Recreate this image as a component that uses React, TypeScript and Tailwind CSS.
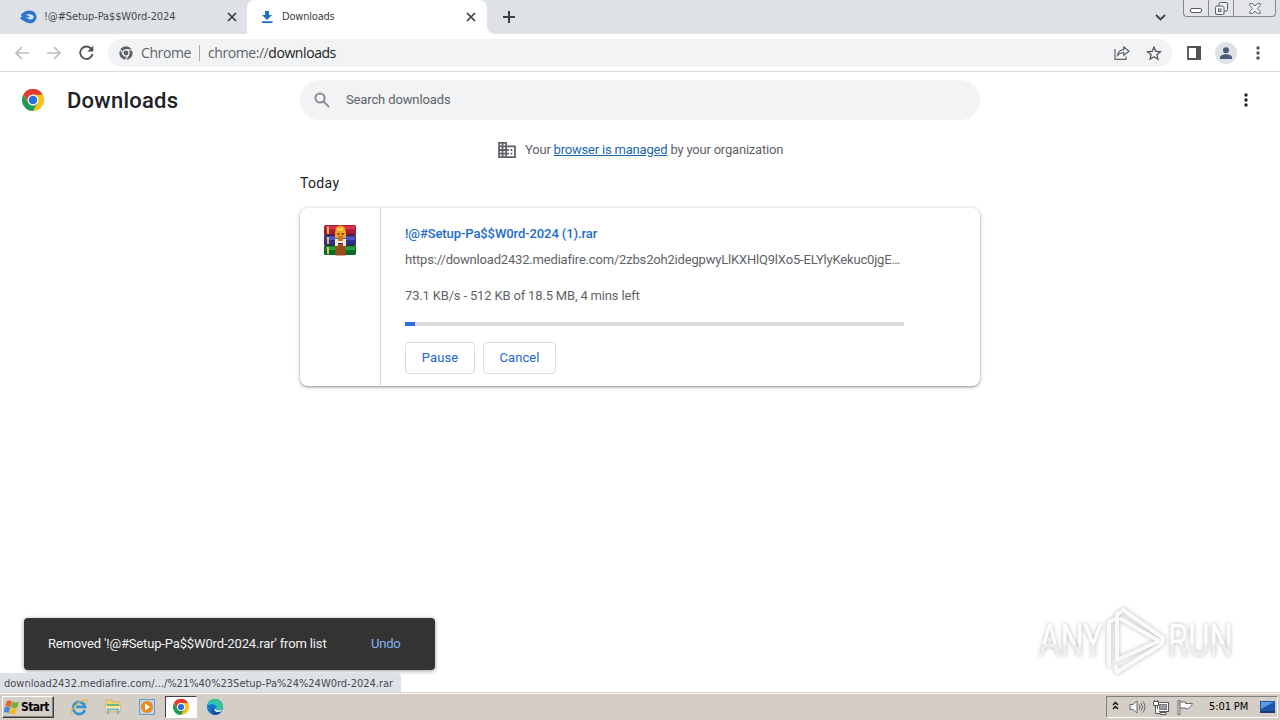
import type { ReactNode } from "react";

const roboto = "font-['Roboto','Liberation_Sans',sans-serif]";
const tahoma = "font-['DejaVu_Sans_Condensed','DejaVu_Sans',sans-serif]";

function ChromeLogo({ size }: { size: number }) {
  return (
    <svg width={size} height={size} viewBox="0 0 48 48" className="shrink-0">
      <path d="M24 24 3.2 12A24 24 0 0 1 44.8 12Z" fill="#db4437" />
      <path d="M24 12H44.8A24 24 0 0 1 24 48L34.4 30Z" fill="#fbc11a" />
      <path d="M24 48A24 24 0 0 1 3.2 12L13.6 30 24 36 34.4 30Z" fill="#1e9b50" />
      <path d="M3.2 12 13.6 30 24 24V12H44.8A24 24 0 0 0 3.2 12Z" fill="#e33b2e" />
      <circle cx="24" cy="24" r="12" fill="#fff" />
      <circle cx="24" cy="24" r="9.3" fill="#2c6fe0" />
    </svg>
  );
}

function ChromeMono() {
  return (
    <svg width="14" height="14" viewBox="0 0 48 48" className="shrink-0">
      <circle cx="24" cy="24" r="23" fill="#5f6368" />
      <circle cx="24" cy="24" r="10.5" fill="none" stroke="#f1f3f4" strokeWidth="4" />
      <path d="M24 13.5H45M14.9 29.2 4.5 11M33.1 29.2 22.5 47.5" stroke="#f1f3f4" strokeWidth="4" />
    </svg>
  );
}

function CloseIcon() {
  return (
    <svg width="10" height="10" viewBox="0 0 10 10" className="shrink-0">
      <path d="M1 1 9 9M9 1 1 9" stroke="#3c4043" strokeWidth="1.7" />
    </svg>
  );
}

function Dots({ color }: { color: string }) {
  return (
    <svg width="4" height="14" viewBox="0 0 4 14" fill={color} className="shrink-0">
      <circle cx="2" cy="2" r="1.7" />
      <circle cx="2" cy="7" r="1.7" />
      <circle cx="2" cy="12" r="1.7" />
    </svg>
  );
}

function TabStrip() {
  return (
    <div className="relative flex h-[34px] shrink-0 bg-[#dee1e6]">
      <div className={`flex w-[247px] items-center pr-[10px] pl-5 text-[11px] text-[#45494d] ${tahoma}`}>
        <svg width="17" height="14" viewBox="0 0 17 14" className="shrink-0">
          <path d="M3 3C4.500 1.300 6.500.5 9.500.5c4.200 0 7 2.800 7 6.400S13.500 13.300 10 13.300c-2.700 0-4.500-1.300-6-2.300C2.500 10 .3 10 .3 8.300c0-1 1-1.500 2.200-1.500C1.500 6.500 1 5.900 1.200 4.800 1.400 3.600 2.200 3 3 3Z" fill="#2f78c9" />
          <path d="M5.500 4.800C8 3.800 12 3.900 13.300 5.800c1 1.600-.3 3.700-2.500 3.700-2.300 0-3-1.300-5-1.800 1.700-.2 3-.2 4.200.1C9.500 6 8 5.200 5.500 4.800Z" fill="#dceaf8" />
        </svg>
        <span className="ml-[7px] flex-1 tracking-[-0.1px] whitespace-nowrap">!@#Setup-Pa$$W0rd-2024</span>
        <CloseIcon />
      </div>
      <div className={`flex w-[240px] items-center rounded-t-lg bg-white pr-[11px] pl-[14px] text-[11px] text-[#3c4043] ${tahoma}`}>
        <svg width="12" height="14" viewBox="0 0 12 14" className="shrink-0">
          <path d="M4 1h4v4h3L6 10 1 5h3ZM1 11.300h10.500v1.700H1Z" fill="#1a73c8" />
        </svg>
        <span className="ml-[9px] flex-1 tracking-[-0.2px]">Downloads</span>
        <CloseIcon />
      </div>
      <svg width="8" height="8" viewBox="0 0 8 8" className="self-end">
        <path d="M0 0V8H8A8 8 0 0 1 0 0Z" fill="#fff" />
      </svg>
      <svg width="12" height="12" viewBox="0 0 12 12" className="mt-[11px] ml-2">
        <path d="M6 0V12M0 6H12" stroke="#3c4043" strokeWidth="2" />
      </svg>
      <div className="flex-1" />
      <svg width="11" height="7" viewBox="0 0 11 7" className="mt-[14px] mr-[17px]">
        <path d="M1 1 5.500 5.500 10 1" fill="none" stroke="#3c4043" strokeWidth="1.800" />
      </svg>
      <div className="mr-[4px] flex h-[17px] w-[93px] rounded-b-[4px] border border-t-0 border-[#85888e] bg-[#e3e5e9]">
        <div className="flex w-[25px] items-center justify-center border-r border-[#85888e] pt-1">
          <div className="h-[5px] w-3 rounded-[2px] border border-[#565b63] bg-white" />
        </div>
        <div className="flex w-[25px] items-center justify-center border-r border-[#85888e]">
          <svg width="13" height="13" viewBox="0 0 13 13" fill="#f6f7f8" stroke="#565b63">
            <rect x="4" y=".5" width="8.500" height="8.500" rx="1.500" />
            <rect x=".5" y="4" width="8.500" height="8.500" rx="1.500" />
            <rect x="3.500" y="7" width="2.500" height="2.500" />
          </svg>
        </div>
        <div className="flex flex-1 items-center justify-center">
          <svg width="12" height="11" viewBox="0 0 12 11">
            <path d="M.7.700H3.800L6 3 8.200.7h3.100v1.800L8.300 5.500l3 3v1.800H8.200L6 8 3.800 10.300H.7V8.500l3-3-3-3Z" fill="#f6f7f8" stroke="#565b63" strokeWidth=".9" />
          </svg>
        </div>
      </div>
    </div>
  );
}

function Arrow({ flip }: { flip?: boolean }) {
  return (
    <svg width="14" height="14" viewBox="0 0 14 14" className={flip ? "rotate-180" : ""}>
      <path d="M14 7H1.500M7 1 1 7l6 6" fill="none" stroke="#babcbe" strokeWidth="1.700" />
    </svg>
  );
}

function Toolbar() {
  return (
    <div className="flex h-[38px] shrink-0 items-center border-b border-[#d8dadd] bg-white pl-[15px]">
      <Arrow />
      <div className="ml-[18px] flex"><Arrow flip /></div>
      <svg width="15" height="15" viewBox="0 0 15 15" className="ml-[18px]">
        <path d="M12.600 4.300A6.200 6.200 0 1 0 13.500 9" fill="none" stroke="#505458" strokeWidth="1.900" />
        <path d="M14.300.600V6.500H8.400Z" fill="#505458" />
      </svg>
      <div className="ml-[14px] flex h-[28px] w-[1064px] items-center rounded-full bg-[#f1f3f4] pr-[10px] pl-[11px] font-['Open_Sans','Noto_Sans',sans-serif] text-[14px]">
        <ChromeMono />
        <span className="ml-2 tracking-[-0.4px] text-[#5f6368]">Chrome</span>
        <span className="mx-2 h-4 w-px bg-[#a5a8ac]" />
        <span className="tracking-[-0.43px] text-[#5f6368]">chrome://<span className="text-[#202124]">downloads</span></span>
        <span className="flex-1" />
        <svg width="16" height="14" viewBox="0 0 16 14" fill="none" stroke="#5f6368" strokeWidth="1.200">
          <path d="M1 3V13.300H12V10.500" />
          <path d="M3.500 9.300C4.200 5.500 6.500 3.700 9.800 3.600V.9L15 5.200 9.800 9.300V6.700C7 6.700 5.200 7.500 3.500 9.300Z" />
        </svg>
        <svg width="16" height="16" viewBox="2 1.500 20 20" fill="#505458" className="ml-4">
          <path d="m22 9.240-7.190-.62L12 2 9.190 8.630 2 9.240l5.460 4.730L5.820 21 12 17.270 18.180 21l-1.630-7.030L22 9.240ZM12 15.400l-3.760 2.270 1-4.280-3.320-2.880 4.380-.38L12 6.100l1.710 4.040 4.380.38-3.320 2.880 1 4.280L12 15.400Z" />
        </svg>
      </div>
      <svg width="14" height="14" viewBox="0 0 14 14" className="ml-[15px]">
        <path d="M1 1H13V13H1Z" fill="none" stroke="#505458" strokeWidth="1.800" />
        <path d="M9 0h5v14H9Z" fill="#505458" />
      </svg>
      <svg width="22" height="22" viewBox="0 0 22 22" className="ml-[14px]">
        <circle cx="11" cy="11" r="11" fill="#dfe2e6" />
        <circle cx="11" cy="8.200" r="3" fill="#4b5a78" />
        <path d="M5 17V15.500C5 13.200 8.500 12.200 11 12.200s6 1 6 3.300V17Z" fill="#4b5a78" />
      </svg>
      <div className="ml-[19px]"><Dots color="#505458" /></div>
    </div>
  );
}

function RarIcon() {
  return (
    <svg width="32" height="32" viewBox="0 0 32 32" className="shrink-0">
      <rect x="0" y="1" width="32" height="10" rx="1.500" fill="#a51a35" />
      <rect x="2" y="2" width="29" height="3.500" fill="#d8324c" />
      <rect x="0" y="11" width="32" height="10" rx="1.500" fill="#31308f" />
      <rect x="2" y="12.500" width="29" height="3.500" fill="#5354c6" />
      <rect x="0" y="21" width="32" height="10" rx="1.500" fill="#0c6a27" />
      <rect x="2" y="22.500" width="29" height="3.500" fill="#2a9c42" />
      <path d="M4 2.500V10M4 13V20M4 23v7" stroke="#e9bd52" strokeWidth="2" />
      <path d="M0 11H32M0 21H32" stroke="#2a1620" strokeWidth=".8" />
      <rect x="11.500" y="20" width="10" height="11.500" fill="#9a4e20" />
      <path d="M11 14C10.500 5 12.500 1.500 16.500 1.500S22.500 5 22 14Z" fill="#f3a51d" />
      <path d="M13 4h6v3h-6Z" fill="#ffd049" />
      <path d="M13 9h2.500v2H13ZM17.500 9H20v2h-2.500Z" fill="#9a4e20" />
      <path d="M11 15h3v7h-3ZM19 15h3v7h-3ZM13 17h7v2h-7Z" fill="#f7ead0" />
      <path d="M14 12h5v5h-5Z" fill="#c9741c" />
    </svg>
  );
}

function Button({ width, children }: { width: string; children: ReactNode }) {
  return (
    <button className={`h-8 rounded-[4px] border border-[#dadce0] text-[13px] tracking-[0.08px] text-[#1a66cc] ${width}`}>
      {children}
    </button>
  );
}

function DownloadCard() {
  return (
    <div className="flex h-[178px] w-[680px] rounded-lg bg-white shadow-[0_1px_2px_rgba(60,64,67,0.4),0_1px_4px_1px_rgba(60,64,67,0.2)]">
      <div className="flex w-[81px] shrink-0 justify-center border-r border-[#d5d6d8] pt-4">
        <RarIcon />
      </div>
      <div className="flex min-w-0 flex-col pl-6 text-[13px] leading-5 whitespace-nowrap text-[#5f6368]">
        <a className="mt-4 font-medium tracking-[-0.09px] text-[#1a6bd0]">!@#Setup-Pa$$W0rd-2024 (1).rar</a>
        <span className="mt-[6px] tracking-[-0.185px]">https://download2432.mediafire.com/2zbs2oh2idegpwyLlKXHlQ9lXo5-ELYlyKekuc0jgE…</span>
        <span className="mt-4 tracking-[-0.165px]">73.1 KB/s - 512 KB of 18.5 MB, 4 mins left</span>
        <div className="mt-4 h-1 w-[499px] bg-[#dcdcdc]">
          <div className="h-1 w-[10px] bg-[#2a6fdb]" />
        </div>
        <div className="mt-4 flex gap-2">
          <Button width="w-[70px]">Pause</Button>
          <Button width="w-[73px]">Cancel</Button>
        </div>
      </div>
    </div>
  );
}

function Watermark() {
  return (
    <svg width="222" height="74" viewBox="0 -2 222 74" className="absolute top-[532px] left-[1034px] drop-shadow-[0_0_2px_rgba(0,0,0,0.28)]">
      <defs>
        <linearGradient id="fade" x1="0" y1="0" x2="0" y2="1">
          <stop offset="0" stopColor="#fff" />
          <stop offset=".54" stopColor="#fff" />
          <stop offset=".58" stopColor="#ededed" />
          <stop offset="1" stopColor="#f3f3f3" />
        </linearGradient>
      </defs>
      <g fill="none" stroke="#fafafa" strokeWidth="4" strokeLinejoin="round" strokeLinecap="round">
        <path d="M83 8V54L125 35 87 13" />
        <path d="M84 8 89 4 129 32 128 38 83 66M83 66 82 61M75 59V16L81 13" />
      </g>
      <g fill="url(#fade)" className="font-['Roboto','Liberation_Sans',sans-serif] text-[44px]">
        <text x="5" y="50" textLength="64" lengthAdjust="spacingAndGlyphs">ANY</text>
        <text x="134" y="50" textLength="65" lengthAdjust="spacingAndGlyphs">RUN</text>
      </g>
    </svg>
  );
}

function DownloadsPage() {
  return (
    <main className={`relative flex h-[620px] shrink-0 flex-col bg-white ${roboto}`}>
      <header className="flex h-14 items-center">
        <div className="flex w-[300px] items-center pl-[22px]">
          <ChromeLogo size={22} />
          <h1 className="ml-[23px] text-[22px] font-medium tracking-[0.25px] text-[#202124]">Downloads</h1>
        </div>
        <div className="flex h-10 w-[680px] items-center rounded-full bg-[#f1f3f4] pl-[14px] text-[13px] text-[#5f6368]">
          <svg width="16" height="16" viewBox="0 0 16 16" fill="none" stroke="#8b8e92" strokeWidth="2">
            <circle cx="6" cy="6" r="4.600" />
            <path d="M9.500 9.500 15 15" />
          </svg>
          <span className="ml-4 tracking-[-0.13px]">Search downloads</span>
        </div>
        <div className="ml-[264px]"><Dots color="#202124" /></div>
      </header>
      <div className="mx-auto flex w-[680px] flex-col">
        <div className="flex h-11 items-center pl-[198px] text-[13px] text-[#5f6368]">
          <svg width="18" height="16" viewBox="0 0 20 18" fill="#5f6368">
            <path d="M10 4V0H0v18h20V4H10ZM4 16H2v-2h2v2Zm0-4H2v-2h2v2Zm0-4H2V6h2v2Zm0-4H2V2h2v2Zm4 12H6v-2h2v2Zm0-4H6v-2h2v2Zm0-4H6V6h2v2Zm0-4H6V2h2v2Zm10 12h-8v-2h2v-2h-2v-2h2V8h-2V6h8v10Zm-2-8h-2v2h2V8Zm0 4h-2v2h2v-2Z" />
          </svg>
          <span className="ml-[9px] tracking-[-0.2px]">Your <a className="text-[#1967b2] underline">browser is managed</a> by your organization</span>
        </div>
        <h2 className="mb-[14px] h-[22px] text-[14px] leading-[22px] tracking-[0.35px] text-[#202124]">Today</h2>
        <DownloadCard />
      </div>
      <Watermark />
      <div className="absolute top-[546px] left-6 flex h-[52px] w-[411px] items-center rounded-[4px] bg-[#333] pl-6 text-[13px] shadow-[0_1px_4px_rgba(0,0,0,0.4)]">
        <span className="w-[323px] tracking-[-0.15px] text-[#f1f1f1]">Removed '!@#Setup-Pa$$W0rd-2024.rar' from list</span>
        <span className="tracking-[-0.2px] text-[#8ab4f8]">Undo</span>
      </div>
      <div className={`absolute top-[601px] left-0 flex h-[19px] w-[401px] items-center rounded-tr-[4px] bg-[#dee1e6] pt-[3px] pl-1 text-[11px] whitespace-nowrap text-[#474b50] ${tahoma}`}>
        <span className="tracking-[-0.01px]">download2432.mediafire.com/.../%21%40%23Setup-Pa%24%24W0rd-2024.rar</span>
      </div>
    </main>
  );
}

function Taskbar() {
  return (
    <footer className={`flex h-[28px] shrink-0 items-center border-t border-[#d4d0c8] bg-[#d4cec7] pt-px text-[11px] text-black shadow-[inset_0_1px_0_#fff] ${tahoma}`}>
      <div className="ml-[2px] flex h-[22px] w-[52px] items-center border border-t-white border-r-[#404040] border-b-[#404040] border-l-white pl-px font-bold shadow-[inset_-1px_-1px_0_#808080]">
        <svg width="15" height="16" viewBox="0 0 15 16" className="shrink-0">
          <path d="M3 2C5 1 6.500 1.500 8 2.500L6.500 8C5 7 3.500 6.800 1 7.700Z" fill="#e5652b" />
          <path d="M8.500 2.800c2 1 4 1.100 6.500-.1L13.300 8.200C11.500 9 9 9.200 7 8.300Z" fill="#76ae38" />
          <path d="M.8 8.200C3 7.400 4.800 7.600 6.200 8.500L4.700 14.300C3.200 13.300 1.500 13-.5 13.800Z" fill="#438bd5" />
          <path d="M6.700 8.900C8.500 9.800 11 9.600 13 8.800L11.500 14.700C9.800 15.500 7.500 15.600 5.200 14.700Z" fill="#f4bc2d" />
        </svg>
        <span className="ml-[2px] text-[12px] tracking-[-0.55px]">Start</span>
      </div>
      <svg width="18" height="18" viewBox="0 0 18 18" className="ml-[16px]">
        <path d="M14.800 12A6 6 0 1 1 15 8.800H6.200" fill="none" stroke="#3294d5" strokeWidth="2.700" />
        <path d="M1.500 16.500C-1 13 9 2 15.500 1.700c2.300 0 1.500 2.500.5 4" fill="none" stroke="#e2b93f" strokeWidth="1.300" />
      </svg>
      <svg width="16" height="16" viewBox="0 0 16 16" className="ml-[17px]">
        <path d="M1 1h6l1 2h7v10H1Z" fill="#efd27a" stroke="#c9a64d" strokeWidth=".7" />
        <path d="M2 5h12v2H2Z" fill="#73b474" />
        <path d="M1 7h14v5H1Z" fill="#f8e7a6" />
        <path d="M3 15v-4.500h10V15" fill="none" stroke="#7db5dd" strokeWidth="2.200" />
      </svg>
      <svg width="16" height="16" viewBox="0 0 16 16" className="ml-[18px]">
        <rect x=".5" y=".5" width="15" height="15" fill="#b9d6ed" stroke="#6b9cc4" />
        <circle cx="8" cy="8" r="6" fill="#ef8a19" />
        <path d="M6 4.500 11.500 8 6 11.500Z" fill="#fff" />
      </svg>
      <div className="ml-[10px] flex h-[22px] w-[32px] items-center justify-center border border-t-[#404040] border-r-white border-b-white border-l-[#404040] bg-white">
        <ChromeLogo size={16} />
      </div>
      <svg width="16" height="16" viewBox="0 0 16 16" className="ml-[10px]">
        <circle cx="8" cy="8" r="8" fill="#1478c8" />
        <path d="M.5 6C1.500 2 4.500 0 8 0c5 0 8 3.500 8 7 0 2.800-2 4-4.500 4-2 0-3-.8-2-2C11 6.500 6 3 .5 6Z" fill="#35c4a0" />
        <path d="M1 5.500C5.500 2.500 9 4.800 9.800 7" fill="none" stroke="#2cc0df" strokeWidth="1.800" />
        <path d="M6 8c-1 4 3 6 7.500 4.500l1-.5C13 14.500 10.500 16 8 16 4 15 3.500 10 6 8Z" fill="#124f97" />
        <path d="M9.300 9.200c-1 1.300.4 2.100 2.700 2.100 1.700 0 3-.6 3.600-1.500L14 12.600c-4 1.400-6.500-.5-6.500-2.200Z" fill="#e9f2f5" />
      </svg>
      <div className="flex-1" />
      <div className="mr-[2px] flex h-[22px] w-[172px] items-center border border-t-[#808080] border-r-white border-b-white border-l-[#808080]">
        <svg width="7" height="9" viewBox="0 0 7 9" className="mb-[3px] ml-[5px]">
          <path d="M1 4 3.500 1.500 6 4M1 8 3.500 5.500 6 8" fill="none" stroke="#000" strokeWidth="1.300" />
        </svg>
        <svg width="17" height="14" viewBox="0 0 17 14" className="ml-[10px]" fill="#f7f7f7" stroke="#66686b">
          <path d="M1 4.500H4L8 1V13L4 9.500H1Z" />
          <path d="M10 4.500Q12 7 10 9.500M12 3Q15 7 12 11M14 1.500Q18 7 14 12.500" fill="none" />
        </svg>
        <svg width="17" height="15" viewBox="0 0 17 15" className="ml-[7px]">
          <rect x="4.500" y="2.500" width="11" height="9" fill="#fff" stroke="#55575a" />
          <rect x="6.500" y="4.500" width="7" height="5" fill="#9a9c9f" stroke="#77797c" />
          <path d="M7 14.500V12.500H13V14.500Z" fill="#fff" stroke="#55575a" />
          <path d="M.5 1.500V5.500H5.500V1.500ZM2.500 5.500V13.500H7M1.500 0V2M4.500 0V2" fill="#fff" stroke="#55575a" />
        </svg>
        <svg width="17" height="15" viewBox="0 0 17 15" className="ml-[7px]" fill="#fff" stroke="#66686b">
          <path d="M1 .5H3V14.500H1Z" />
          <path d="M3 2H8.500V3.500H15.500C14.500 5.500 13.500 8.500 9 9V8H3Z" />
        </svg>
        <span className="ml-[15px] w-[41px] tracking-[-0.1px] whitespace-nowrap">5:01 PM</span>
        <svg width="15" height="12" viewBox="0 0 15 12" className="ml-[10px]">
          <path d="M0 0H15V12H0Z" fill="#1c57aa" />
          <path d="M1 1H14L1 8Z" fill="#5d9ae0" />
          <path d="M0 10H15V12H0Z" fill="#18396e" />
        </svg>
      </div>
    </footer>
  );
}

export default function App() {
  return (
    <div className="flex h-[720px] w-[1280px] flex-col overflow-hidden bg-white">
      <TabStrip />
      <Toolbar />
      <DownloadsPage />
      <Taskbar />
    </div>
  );
}
